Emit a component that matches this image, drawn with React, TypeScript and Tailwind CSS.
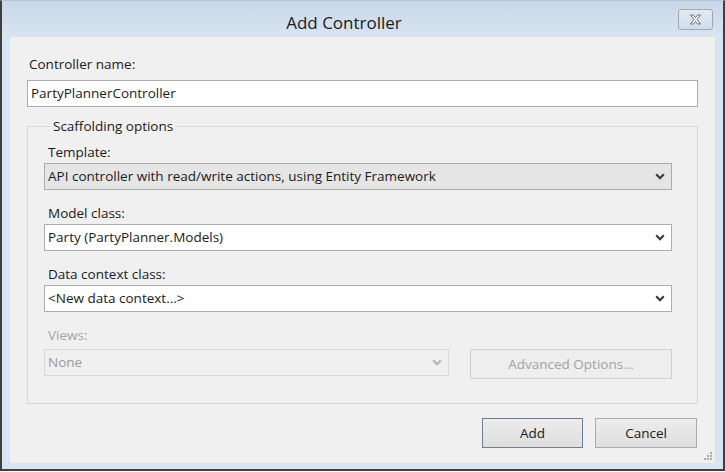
import React from "react";

const font = { fontFamily: '"Open Sans", "Noto Sans", sans-serif' };

function Chevron({ color = "#3b3b3b" }: { color?: string }) {
  return (
    <svg width="10" height="7" viewBox="0 0 10 7" className="shrink-0">
      <polyline points="1.2,1.3 5,5.2 8.8,1.3" fill="none" stroke={color} strokeWidth="2.2" />
    </svg>
  );
}

function Select({
  value,
  variant = "white",
}: {
  value: string;
  variant?: "white" | "gray" | "disabled";
}) {
  const cls =
    variant === "gray"
      ? "bg-[#e5e5e5] border-[#acacac] text-[#1a1a1a]"
      : variant === "disabled"
      ? "bg-[#f0f0f0] border-[#d9d9d9] text-[#9a9a9a]"
      : "bg-white border-[#abadb3] text-[#1a1a1a]";
  return (
    <div
      className={`flex h-[27px] items-center justify-between border pl-[3px] pr-[6px] text-[13.5px] ${cls}`}
    >
      <span className="leading-none">{value}</span>
      <Chevron color={variant === "disabled" ? "#b4b4b4" : "#3b3b3b"} />
    </div>
  );
}

function Label({ children, muted }: { children: React.ReactNode; muted?: boolean }) {
  return (
    <div
      className={`flex h-[18px] items-center pl-[4px] pt-[2px] text-[13.5px] ${muted ? "text-[#a3a3a3]" : "text-[#1a1a1a]"}`}
    >
      {children}
    </div>
  );
}

export default function App() {
  return (
    <div className="h-[472px] w-[725px] bg-white" style={font}>
      <div className="flex h-[471px] w-[725px] flex-col border-x-2 border-b-2 border-t border-x-[#3f3f3f] border-b-[#3f3f3f] border-t-[#b9c7d6] bg-[#d8e4f1]">
        {/* Title bar */}
        <div className="flex h-[36px] items-center bg-gradient-to-b from-[#c9d8e8] to-[#d8e4f1] pl-[8px] pr-[10px]">
          <div className="flex-1 pt-[8px] text-center text-[17px] text-[#1a1a1a]">Add Controller</div>
          <div className="pt-[1px]">
            <div className="flex h-[21px] w-[35px] items-center justify-center rounded-[3px] border border-[#9ea8b4] bg-gradient-to-b from-[#e3eaf2] to-[#d3dde8]">
              <svg width="13" height="11" viewBox="0 0 13 11">
                <path
                  d="M1.5 1 L4.5 1 L6.5 3.6 L8.5 1 L11.5 1 L8 5.5 L11.5 10 L8.5 10 L6.5 7.4 L4.5 10 L1.5 10 L5 5.5 Z"
                  fill="#ffffff"
                  stroke="#5a5f66"
                  strokeWidth="0.9"
                  strokeLinejoin="round"
                />
              </svg>
            </div>
          </div>
        </div>

        {/* Content */}
        <div className="relative mx-[8px] mb-[6px] flex flex-1 flex-col bg-[#f0f0f0] px-[17px] pt-[17px]">
          <div className="flex h-[18px] items-center pl-[2px] pt-[2px] text-[13.5px] text-[#1a1a1a]">Controller name:</div>
          <div className="mt-[8px] flex h-[27px] items-center border border-[#abadb3] bg-white pl-[3px] text-[13.5px] text-[#1a1a1a]">
            PartyPlannerController
          </div>

          <fieldset className="mt-[10px] border border-[#d9d9d9] pl-[16px] pr-[25px] pb-[24px]">
            <legend className="ml-[7px] px-[2px] text-[13.5px] leading-[18px] text-[#1a1a1a]">
              Scaffolding options
            </legend>
            <div className="pt-[7px]">
              <Label>Template:</Label>
              <div className="mt-[3px]">
                <Select value="API controller with read/write actions, using Entity Framework" variant="gray" />
              </div>
              <div className="mt-[13px]">
                <Label>Model class:</Label>
              </div>
              <div className="mt-[3px]">
                <Select value="Party (PartyPlanner.Models)" />
              </div>
              <div className="mt-[13px]">
                <Label>Data context class:</Label>
              </div>
              <div className="mt-[3px]">
                <Select value="<New data context...>" />
              </div>
              <div className="mt-[13px]">
                <Label muted>Views:</Label>
              </div>
              <div className="mt-[6px] flex items-start justify-between">
                <div className="w-[405px]">
                  <Select value="None" variant="disabled" />
                </div>
                <div className="flex h-[30px] w-[202px] items-center justify-center border border-[#d0d0d0] bg-[#eeeeee] text-[13.5px] text-[#a3a3a3]">
                  Advanced Options...
                </div>
              </div>
            </div>
          </fieldset>

          <div className="mt-[14px] flex justify-end gap-[12px] pr-[1px]">
            <div className="flex h-[30px] w-[101px] items-center justify-center border border-[#6f7f93] bg-gradient-to-b from-[#ececec] to-[#dedede] text-[13.5px] text-[#1a1a1a]">
              Add
            </div>
            <div className="flex h-[30px] w-[102px] items-center justify-center border border-[#acacac] bg-gradient-to-b from-[#ececec] to-[#dedede] text-[13.5px] text-[#1a1a1a]">
              Cancel
            </div>
          </div>

          {/* resize grip */}
          <svg className="absolute bottom-[2px] right-[2px]" width="10" height="10" viewBox="0 0 10 10">
            {[
              [8, 2],
              [5, 5],
              [8, 5],
              [2, 8],
              [5, 8],
              [8, 8],
            ].map(([x, y], i) => (
              <rect key={i} x={x - 1} y={y - 1} width="2" height="2" fill="#a9a9a9" />
            ))}
          </svg>
        </div>
      </div>
    </div>
  );
}
